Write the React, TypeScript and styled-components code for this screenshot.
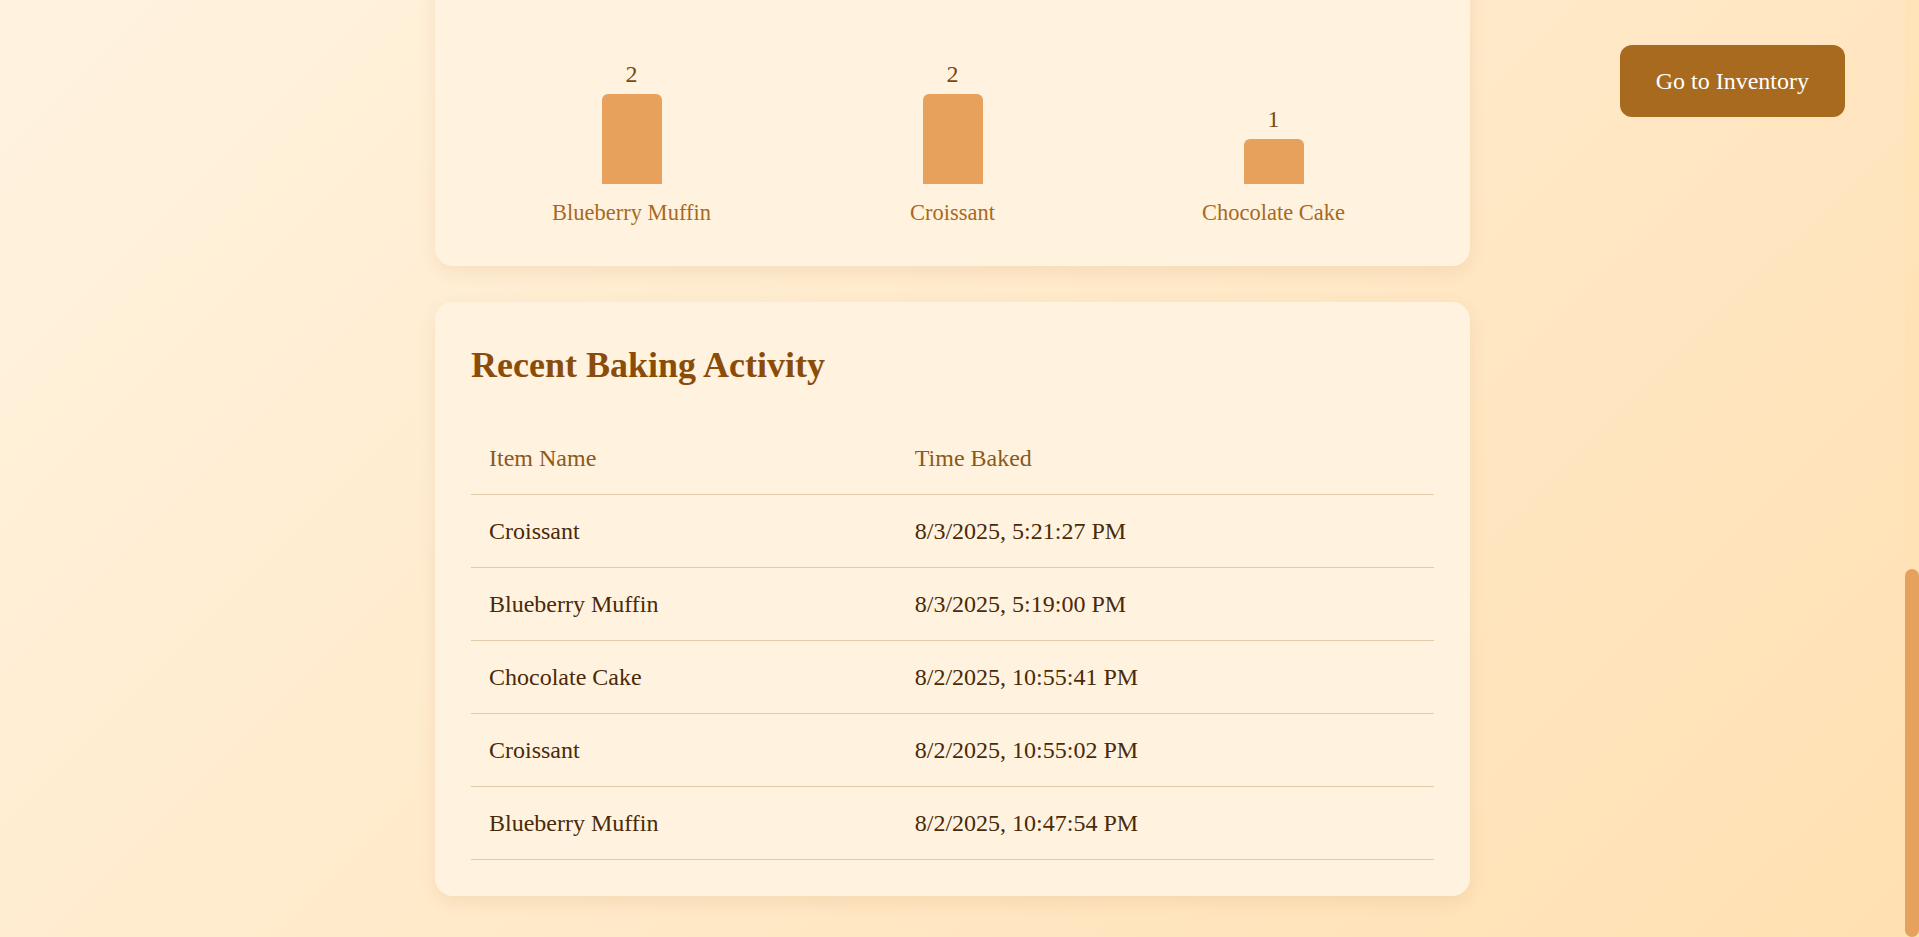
import React, { useLayoutEffect, useRef, useState } from 'react'
import styled, { createGlobalStyle } from 'styled-components'

const GlobalStyle = createGlobalStyle`
	html, body {
		margin: 0;
		height: 100%;
		overflow: hidden;
	}
	body {
		background: linear-gradient(135deg, #fff3e0 0%, #ffe0b2 100%);
		font-family: "Liberation Serif", "Times New Roman", serif;
		font-size: 24px;
		line-height: 1.5;
		color: #4e2f0c;
	}
`

const Shell = styled.div`
	display: flex;
	height: 100vh;
`

const Viewport = styled.div`
	flex: 1;
	overflow-y: auto;
	scrollbar-width: none;
	&::-webkit-scrollbar {
		display: none;
	}
`

const ScrollRail = styled.div`
	width: 14px;
	flex-shrink: 0;
	background: rgba(255, 226, 180, 0.6);
`

const ScrollThumb = styled.div`
	background: #e6a15c;
	border-radius: 7px;
`

const Page = styled.main`
	max-width: 1035px;
	margin: 0 auto;
	padding: 36px 0 41px;
	display: flex;
	flex-direction: column;
	gap: 36px;
`

const Header = styled.header`
	text-align: center;
	padding: 24px 0 12px;
`

const PageTitle = styled.h1`
	margin: 0;
	font-size: 54px;
	color: #8b4c0a;
`

const Subtitle = styled.p`
	margin: 6px 0 0;
	color: #a8691d;
`

const StatsGrid = styled.section`
	display: grid;
	grid-template-columns: repeat(3, 1fr);
	gap: 36px;
`

const StatCard = styled.div`
	background: #fff3e0;
	border-radius: 18px;
	padding: 30px 36px;
	box-shadow: 0 6px 18px rgba(139, 76, 10, 0.08);
	text-align: center;
`

const StatValue = styled.div`
	font-size: 48px;
	font-weight: 700;
	color: #8b4c0a;
`

const StatLabel = styled.div`
	font-size: 22px;
	color: #a8691d;
`

const Card = styled.section<{ $minHeight?: number }>`
	background: #fff3e0;
	border-radius: 18px;
	padding: 36px;
	box-shadow: 0 6px 18px rgba(139, 76, 10, 0.09);
	min-height: ${p => (p.$minHeight ? `${p.$minHeight}px` : 'auto')};
	box-sizing: border-box;
`

const CardTitle = styled.h2`
	margin: 0 0 30px;
	font-size: 36px;
	font-weight: 700;
	line-height: 1.5;
	color: #8b4c0a;
`

const RecipeGrid = styled.div`
	display: grid;
	grid-template-columns: repeat(2, 1fr);
	gap: 24px;
`

const RecipeButton = styled.button`
	font-family: "Liberation Serif", "Times New Roman", serif;
	font-size: 24px;
	line-height: 1.5;
	padding: 24px;
	border: 2px solid #e6a15c;
	border-radius: 12px;
	background: #fff8ee;
	color: #8b4c0a;
	cursor: pointer;
`

const Chart = styled.div`
	display: flex;
	align-items: flex-end;
	height: 300px;
`

const ChartColumn = styled.div`
	flex: 1;
	display: flex;
	flex-direction: column;
	align-items: center;
`

const BarValue = styled.span`
	font-size: 24px;
	color: #7b4a12;
	margin-bottom: 2px;
`

const Bar = styled.div<{ $height: number }>`
	width: 60px;
	height: ${p => p.$height}px;
	background: #e7a15d;
	border-radius: 6px 6px 0 0;
`

const BarLabel = styled.span`
	margin-top: 12px;
	font-size: 22.5px;
	color: #a8691d;
`

const Table = styled.table`
	width: 100%;
	border-collapse: collapse;
`

const HeadCell = styled.th`
	text-align: left;
	font-weight: 400;
	padding: 18px;
	color: #8b5a1a;
	border-bottom: 1px solid #e2cba8;
`

const Cell = styled.td`
	padding: 18px;
	color: #4a2a08;
	border-bottom: 1px solid #e2cba8;
`

const InventoryButton = styled.button`
	position: fixed;
	top: 45px;
	right: 74px;
	font-family: "Liberation Serif", "Times New Roman", serif;
	font-size: 24px;
	line-height: 1.5;
	padding: 18px 36px;
	border: none;
	border-radius: 12px;
	background: #a86a1e;
	color: #ffffff;
	cursor: pointer;
`

const recipes = ['Blueberry Muffin', 'Croissant', 'Chocolate Cake', 'Sourdough Loaf']

const summary = [
	{ name: 'Blueberry Muffin', count: 2 },
	{ name: 'Croissant', count: 2 },
	{ name: 'Chocolate Cake', count: 1 },
]

const activity = [
	{ name: 'Croissant', time: '8/3/2025, 5:21:27 PM' },
	{ name: 'Blueberry Muffin', time: '8/3/2025, 5:19:00 PM' },
	{ name: 'Chocolate Cake', time: '8/2/2025, 10:55:41 PM' },
	{ name: 'Croissant', time: '8/2/2025, 10:55:02 PM' },
	{ name: 'Blueberry Muffin', time: '8/2/2025, 10:47:54 PM' },
]

const App = () => {
	const max = Math.max(...summary.map(s => s.count))
	const scroller = useRef<HTMLDivElement>(null)
	const [thumb, setThumb] = useState({ top: 0, height: 0 })

	const syncThumb = () => {
		const el = scroller.current
		if (!el) return
		const ratio = el.clientHeight / el.scrollHeight
		setThumb({ top: el.scrollTop * ratio, height: el.clientHeight * ratio })
	}

	useLayoutEffect(() => {
		const el = scroller.current
		if (el) el.scrollTop = el.scrollHeight
		syncThumb()
	}, [])

	return (
		<>
			<GlobalStyle />
			<Shell>
				<Viewport ref={scroller} onScroll={syncThumb}>
					<Page>
						<Header>
							<PageTitle>Bakery Dashboard</PageTitle>
							<Subtitle>Keep track of everything fresh out of the oven</Subtitle>
						</Header>
						<StatsGrid>
							<StatCard>
								<StatValue>5</StatValue>
								<StatLabel>Items Baked</StatLabel>
							</StatCard>
							<StatCard>
								<StatValue>3</StatValue>
								<StatLabel>Recipes Used</StatLabel>
							</StatCard>
							<StatCard>
								<StatValue>5:21 PM</StatValue>
								<StatLabel>Last Bake</StatLabel>
							</StatCard>
						</StatsGrid>
						<Card $minHeight={790}>
							<CardTitle>Bake Something</CardTitle>
							<RecipeGrid>
								{recipes.map(r => <RecipeButton key={r}>{r}</RecipeButton>)}
							</RecipeGrid>
						</Card>
						<Card>
							<CardTitle>Baked Items Summary</CardTitle>
							<Chart>
								{summary.map(s => (
									<ChartColumn key={s.name}>
										<BarValue>{s.count}</BarValue>
										<Bar $height={(s.count / max) * 90} />
										<BarLabel>{s.name}</BarLabel>
									</ChartColumn>
								))}
							</Chart>
						</Card>
						<Card>
							<CardTitle>Recent Baking Activity</CardTitle>
							<Table>
								<thead>
									<tr>
										<HeadCell>Item Name</HeadCell>
										<HeadCell>Time Baked</HeadCell>
									</tr>
								</thead>
								<tbody>
									{activity.map((a, i) => (
										<tr key={i}>
											<Cell>{a.name}</Cell>
											<Cell>{a.time}</Cell>
										</tr>
									))}
								</tbody>
							</Table>
						</Card>
					</Page>
				</Viewport>
				<ScrollRail>
					<ScrollThumb style={{ marginTop: thumb.top, height: thumb.height }} />
				</ScrollRail>
			</Shell>
			<InventoryButton>Go to Inventory</InventoryButton>
		</>
	)
}

export default App
